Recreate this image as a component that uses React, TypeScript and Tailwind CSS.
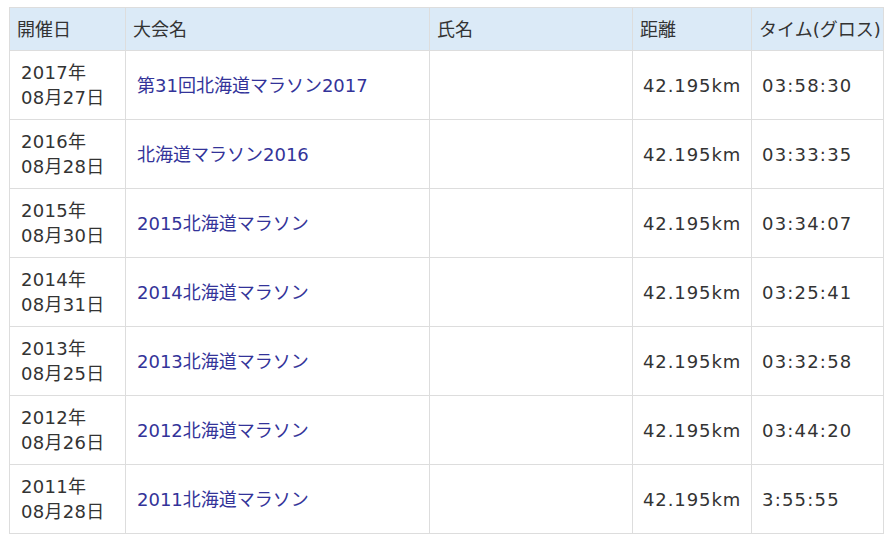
import React from 'react';

const rows = [
  { y: '2017年', d: '08月27日', name: '第31回北海道マラソン2017', dist: '42.195km', time: '03:58:30' },
  { y: '2016年', d: '08月28日', name: '北海道マラソン2016', dist: '42.195km', time: '03:33:35' },
  { y: '2015年', d: '08月30日', name: '2015北海道マラソン', dist: '42.195km', time: '03:34:07' },
  { y: '2014年', d: '08月31日', name: '2014北海道マラソン', dist: '42.195km', time: '03:25:41' },
  { y: '2013年', d: '08月25日', name: '2013北海道マラソン', dist: '42.195km', time: '03:32:58' },
  { y: '2012年', d: '08月26日', name: '2012北海道マラソン', dist: '42.195km', time: '03:44:20' },
  { y: '2011年', d: '08月28日', name: '2011北海道マラソン', dist: '42.195km', time: '3:55:55' },
];

export default function App() {
  return (
    <div
      className="bg-white w-[884px] h-[542px] pl-[9px] pt-[7px] text-[#333] text-[18px]"
      style={{ fontFamily: '"DejaVu Sans", "Noto Sans CJK JP", sans-serif' }}
    >
      <table className="border-collapse table-fixed w-[874px]">
        <colgroup>
          <col className="w-[116px]" />
          <col className="w-[304px]" />
          <col className="w-[203px]" />
          <col className="w-[119px]" />
          <col className="w-[132px]" />
        </colgroup>
        <thead>
          <tr className="bg-[#dbeaf7] h-[43px]">
            {['開催日', '大会名', '氏名', '距離', 'タイム(グロス)'].map((h) => (
              <th key={h} className="border border-[#dddddd] px-[7px] text-left font-normal whitespace-nowrap leading-[25px]">
                {h}
              </th>
            ))}
          </tr>
        </thead>
        <tbody>
          {rows.map((r) => (
            <tr key={r.y} className="h-[69px]">
              <td className="border border-[#dddddd] px-[11px] leading-[25px] align-middle tracking-[0.3px]">
                <div>{r.y}</div>
                <div>{r.d}</div>
              </td>
              <td className="border border-[#dddddd] px-[11px] align-middle">
                <a className="text-[#333399] cursor-pointer">{r.name}</a>
              </td>
              <td className="border border-[#dddddd]"></td>
              <td className="border border-[#dddddd] px-[10px] align-middle whitespace-nowrap tracking-[0.9px]">{r.dist}</td>
              <td className="border border-[#dddddd] px-[10px] align-middle whitespace-nowrap tracking-[1.2px]">{r.time}</td>
            </tr>
          ))}
        </tbody>
      </table>
    </div>
  );
}
